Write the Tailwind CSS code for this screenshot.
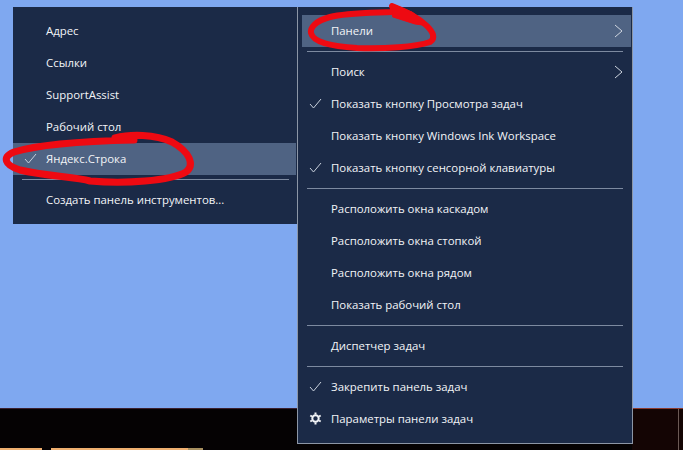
<!DOCTYPE html>
<html lang="ru">
<head>
    <meta charset="UTF-8">
    <title>Панели</title>
    <script src="https://cdn.jsdelivr.net/npm/@tailwindcss/browser@4"></script>
</head>
<body class="m-0">
<div class="relative w-[683px] h-[450px] overflow-hidden bg-[#7fa8f0] font-['Open_Sans',sans-serif] text-[11.4px] text-[#f2f4f7]">

    <!-- taskbar -->
    <div class="absolute left-0 right-0 top-[408px] h-[42px] bg-[#050203] border-t border-[#3a2030]">
        <div class="absolute right-0 top-[-1px] bottom-0 w-[51px] bg-[#140504] border-t border-[#8a3a30]">
            <div class="absolute right-[4px] top-0 bottom-0 w-px bg-[#6b5a55]"></div>
        </div>
        <div class="absolute left-0 top-[39px] w-[42px] h-[3px] bg-[#f0b070]"></div>
        <div class="absolute left-[51px] top-[39px] w-[137px] h-[3px] bg-[#f0b070]"></div>
        <div class="absolute left-[188px] top-[39px] w-[15px] h-[3px] bg-[#a89060]"></div>
    </div>

    <!-- left menu -->
    <div class="absolute left-[13px] top-[7px] w-[285px] h-[217px] bg-[#1b2a47] pt-[8px]">
        <div class="h-[32px] pl-[33px] flex items-center">Адрес</div>
        <div class="h-[32px] pl-[33px] flex items-center">Ссылки</div>
        <div class="h-[32px] pl-[33px] flex items-center">SupportAssist</div>
        <div class="h-[32px] pl-[33px] flex items-center">Рабочий стол</div>
        <div class="h-[32px] w-[283px] pl-[33px] flex items-center bg-[#4f6383] relative">
            <svg class="absolute left-[11px] top-[10px]" width="13" height="11" viewBox="0 0 13 11" fill="none" stroke="#c8d0dc" stroke-width="1"><path d="M1 6l3.500 4L12 1"/></svg>
            Яндекс.Строка
        </div>
        <div class="h-px mx-[9px] mt-[4px] bg-[#7d8aa0]"></div>
        <div class="h-[32px] mt-[4px] pl-[33px] flex items-center">Создать панель инструментов...</div>
    </div>

    <!-- right menu -->
    <div class="absolute left-[297px] top-[7px] w-[336px] h-[437px] bg-[#1b2a47] pt-[8px] border-l border-r border-b border-[#8c96a6]">
        <div class="h-[32px] ml-[4px] mr-[1px] pl-[29px] flex items-center justify-between bg-[#4f6383]">
            Панели
            <svg class="mr-[8px]" width="9" height="14" viewBox="0 0 9 14" fill="none" stroke="#cfd6e0" stroke-width="1"><path d="M1 1l7 6-7 6"/></svg>
        </div>
        <div class="h-px mx-[9px] mt-[4px] bg-[#7d8aa0]"></div>
        <div class="h-[32px] mt-[4px] ml-[4px] mr-[1px] pl-[29px] flex items-center justify-between">
            Поиск
            <svg class="mr-[8px]" width="9" height="14" viewBox="0 0 9 14" fill="none" stroke="#cfd6e0" stroke-width="1"><path d="M1 1l7 6-7 6"/></svg>
        </div>
        <div class="h-[32px] pl-[33px] flex items-center relative">
            <svg class="absolute left-[11px] top-[10px]" width="13" height="11" viewBox="0 0 13 11" fill="none" stroke="#c8d0dc" stroke-width="1"><path d="M1 6l3.500 4L12 1"/></svg>
            Показать кнопку Просмотра задач
        </div>
        <div class="h-[32px] pl-[33px] flex items-center">Показать кнопку Windows Ink Workspace</div>
        <div class="h-[32px] pl-[33px] flex items-center relative">
            <svg class="absolute left-[11px] top-[10px]" width="13" height="11" viewBox="0 0 13 11" fill="none" stroke="#c8d0dc" stroke-width="1"><path d="M1 6l3.500 4L12 1"/></svg>
            Показать кнопку сенсорной клавиатуры
        </div>
        <div class="h-px mx-[9px] mt-[4px] bg-[#7d8aa0]"></div>
        <div class="h-[32px] mt-[4px] pl-[33px] flex items-center">Расположить окна каскадом</div>
        <div class="h-[32px] pl-[33px] flex items-center">Расположить окна стопкой</div>
        <div class="h-[32px] pl-[33px] flex items-center">Расположить окна рядом</div>
        <div class="h-[32px] pl-[33px] flex items-center">Показать рабочий стол</div>
        <div class="h-px mx-[9px] mt-[4px] bg-[#7d8aa0]"></div>
        <div class="h-[32px] mt-[4px] pl-[33px] flex items-center">Диспетчер задач</div>
        <div class="h-px mx-[9px] mt-[4px] bg-[#7d8aa0]"></div>
        <div class="h-[32px] mt-[4px] pl-[33px] flex items-center relative">
            <svg class="absolute left-[11px] top-[10px]" width="13" height="11" viewBox="0 0 13 11" fill="none" stroke="#c8d0dc" stroke-width="1"><path d="M1 6l3.500 4L12 1"/></svg>
            Закрепить панель задач
        </div>
        <div class="h-[32px] pl-[33px] flex items-center relative">
            <svg class="absolute left-[11px] top-[9px]" width="13" height="13" viewBox="0 0 13 13" fill="none" stroke="#f2f4f7"><circle cx="6.500" cy="6.500" r="3.200" stroke-width="2"/><path stroke-width="2" d="M6.500 0.500v2M6.500 10.500v2M1.300 3.500l1.700 1M10 8.500l1.700 1M1.300 9.500l1.700-1M10 4.500l1.700-1"/></svg>
            Параметры панели задач
        </div>
    </div>

    <!-- red marker scribbles -->
    <svg class="absolute left-0 top-0" width="683" height="450" fill="none" stroke="#ee0a12" stroke-linecap="round" stroke-linejoin="round">
        <path stroke-width="7" d="M134 140C90 141 40 144 14 152C2 157 4 165 20 170C45 176 75 177 90 181C125 184 170 181 186 172C195 165 190 152 172 142C155 134 130 134 115 138"/>
        <path stroke-width="6" d="M392 12C370 13 345 13 330 17C315 21 310 28 311 33C313 42 330 46 357 48C385 49 415 47 430 42C436 38 433 32 427 26C418 17 405 11 392 6L395 14"/>
        <path fill="#ee0a12" stroke-width="1" d="M392 4L412 12L430 26L415 24L393 17z"/>
    </svg>
</div>
</body>
</html>
